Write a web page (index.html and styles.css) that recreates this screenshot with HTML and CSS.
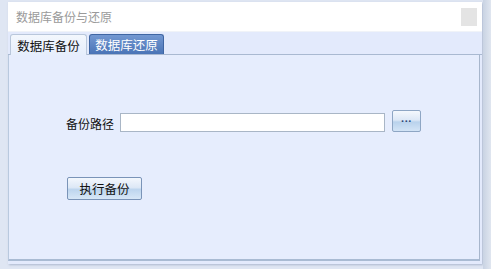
FILE: index.html
```html
<!DOCTYPE html>
<html>
<head>
<meta charset="utf-8">
<link rel="stylesheet" href="styles.css">
</head>
<body>
<div class="screen">
  <div class="window">
    <div class="titlebar">
      <span class="title">数据库备份与还原</span>
      <span class="close"></span>
    </div>
    <div class="tabstrip">
      <div class="tab active">数据库备份</div>
      <div class="tab inactive">数据库还原</div>
    </div>
    <div class="panel">
      <div class="row">
        <span class="label">备份路径</span>
        <input class="path" type="text">
        <button class="browse">···</button>
      </div>
      <button class="exec">执行备份</button>
    </div>
  </div>
  <div class="rightbar"></div>
</div>
</body>
</html>
```
FILE: styles.css
```css
html, body {
  margin: 0;
  padding: 0;
  width: 491px;
  height: 269px;
  overflow: hidden;
  background: #dfe6f3;
  font-family: "Noto Sans CJK SC", "Liberation Sans", sans-serif;
  font-size: 12px;
}
.screen {
  display: flex;
  height: 269px;
  padding-left: 8px;
  box-sizing: border-box;
}
.window {
  width: 475px;
  margin-top: 2px;
  height: 262px;
  display: flex;
  flex-direction: column;
  background: #e3eafc;
  box-shadow: 1px 1px 2px rgba(120,140,170,0.5);
}
.titlebar {
  height: 29px;
  background: #ffffff;
  display: flex;
  align-items: center;
  justify-content: space-between;
  padding: 0 5px 0 8px;
  border-bottom: 1px solid #f0f3f8;
}
.title {
  color: #9a9a9a;
  font-size: 12px;
}
.close {
  width: 16px;
  height: 18px;
  background: #e4e4e4;
  margin-top: 1px;
}
.tabstrip {
  display: flex;
  align-items: flex-end;
  height: 22px;
  padding-left: 2px;
  gap: 2px;
  border-bottom: 1px solid #a9b9d1;
}
.tab {
  height: 20px;
  width: 76px;
  justify-content: center;
  box-sizing: border-box;
  display: flex;
  align-items: center;
  font-size: 12.5px;
  border-radius: 3px 3px 0 0;
}
.tab.active {
  background: linear-gradient(#f3f7fd, #e6eefc);
  border: 1px solid #b9c7db;
  border-bottom: none;
  color: #111;
  height: 21px;
  width: 77px;
  margin-bottom: -1px;
}
.tab.inactive {
  background: linear-gradient(#7398d2, #4a74b6);
  border: 1px solid #3f66a3;
  border-bottom: none;
  color: #ffffff;
  width: 75px;
}
.panel {
  flex: 1;
  margin-right: 2px;
  border-left: 1px solid #b9c9de;
  border-right: 1px solid #a7b6cc;
  border-bottom: 2px solid #a9bbd3;
  background: #e6edfd;
  padding: 57px 0 0 57px;
  margin-bottom: 3px;
}
.row {
  display: flex;
  align-items: center;
  height: 22px;
}
.label {
  color: #111;
  font-size: 12px;
  margin-right: 6px;
}
.path {
  width: 265px;
  height: 19px;
  box-sizing: border-box;
  border: 1px solid #a9b6c6;
  background: #fff;
  margin: 0;
  padding: 0;
  margin-top: -2px;
}
.browse {
  width: 29px;
  height: 22px;
  margin-left: 7px;
  margin-top: -5px;
  border: 1px solid #8ea6c4;
  border-radius: 2px;
  background: linear-gradient(#f4f8fd 0%, #dde8f6 45%, #b9d2ec 55%, #d3e4f6 100%);
  color: #2c4a78;
  font-size: 11px;
  padding: 0;
  line-height: 14px;
  font-family: "Liberation Sans", sans-serif;
  font-weight: bold;
}
.exec {
  display: block;
  margin-top: 43px;
  margin-left: 1px;
  width: 75px;
  height: 23px;
  border: 1px solid #7a94b8;
  border-radius: 2px;
  background: linear-gradient(#f3f7fd 0%, #dde8f6 45%, #bdd5ee 55%, #d7e7f7 100%);
  color: #111;
  font-size: 12.5px;
  padding: 0;
  font-family: "Noto Sans CJK SC", sans-serif;
}
.rightbar {
  width: 8px;
  margin-left: 1px;
  background: linear-gradient(90deg, #c9d3e3, #e0e6f0);
}
```
